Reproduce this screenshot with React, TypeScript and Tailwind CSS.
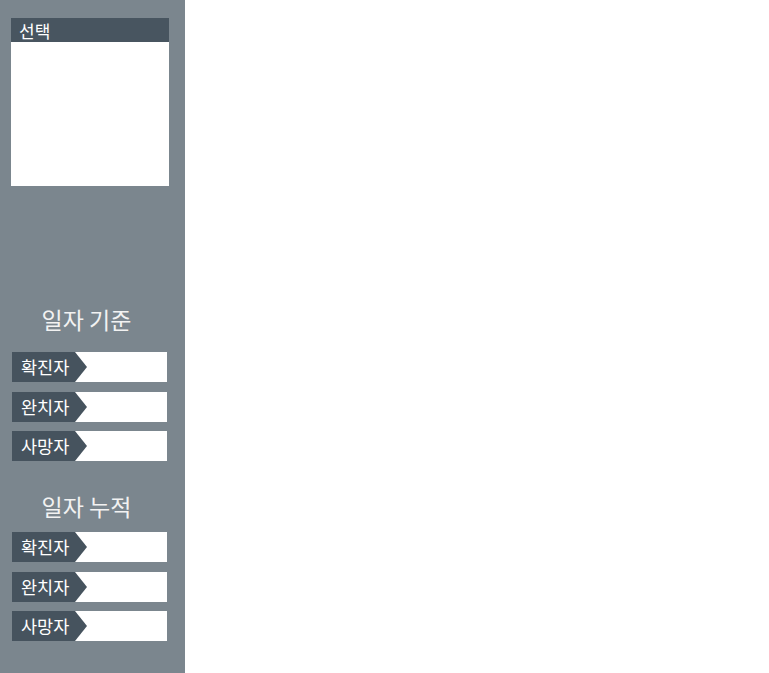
import React from "react";

const font = { fontFamily: '"Noto Sans CJK KR", "Noto Sans", sans-serif' };

function Row({ label, mt }: { label: string; mt: string }) {
  return (
    <div className={`flex h-[30px] w-[155px] bg-white ml-[12px] ${mt}`}>
      <div className="flex h-full w-[75px] items-center bg-[#46535e] pl-[9px] text-[17.5px] leading-none text-white [clip-path:polygon(0_0,63px_0,75px_50%,63px_100%,0_100%)]">
        {label}
      </div>
    </div>
  );
}

export default function App() {
  return (
    <div className="flex h-[673px] w-[769px] bg-white" style={font}>
      <div className="flex h-full w-[185px] flex-col bg-[#7b868e]">
        <div className="ml-[11px] mt-[18px] flex h-[168px] w-[158px] flex-col bg-white">
          <div className="flex h-[24px] items-center bg-[#485560] pl-[8px] text-[17px] leading-none text-white">
            선택
          </div>
        </div>
        <div className="mt-[118px] h-[30px] pr-[12px] text-center text-[23px] leading-[30px] text-[#f2f2f2]">
          일자 기준
        </div>
        <Row label="확진자" mt="mt-[18px]" />
        <Row label="완치자" mt="mt-[10px]" />
        <Row label="사망자" mt="mt-[9px]" />
        <div className="mt-[30px] h-[30px] pr-[12px] text-center text-[23px] leading-[30px] text-[#f2f2f2]">
          일자 누적
        </div>
        <Row label="확진자" mt="mt-[11px]" />
        <Row label="완치자" mt="mt-[10px]" />
        <Row label="사망자" mt="mt-[9px]" />
      </div>
      <div className="flex-1" />
    </div>
  );
}
